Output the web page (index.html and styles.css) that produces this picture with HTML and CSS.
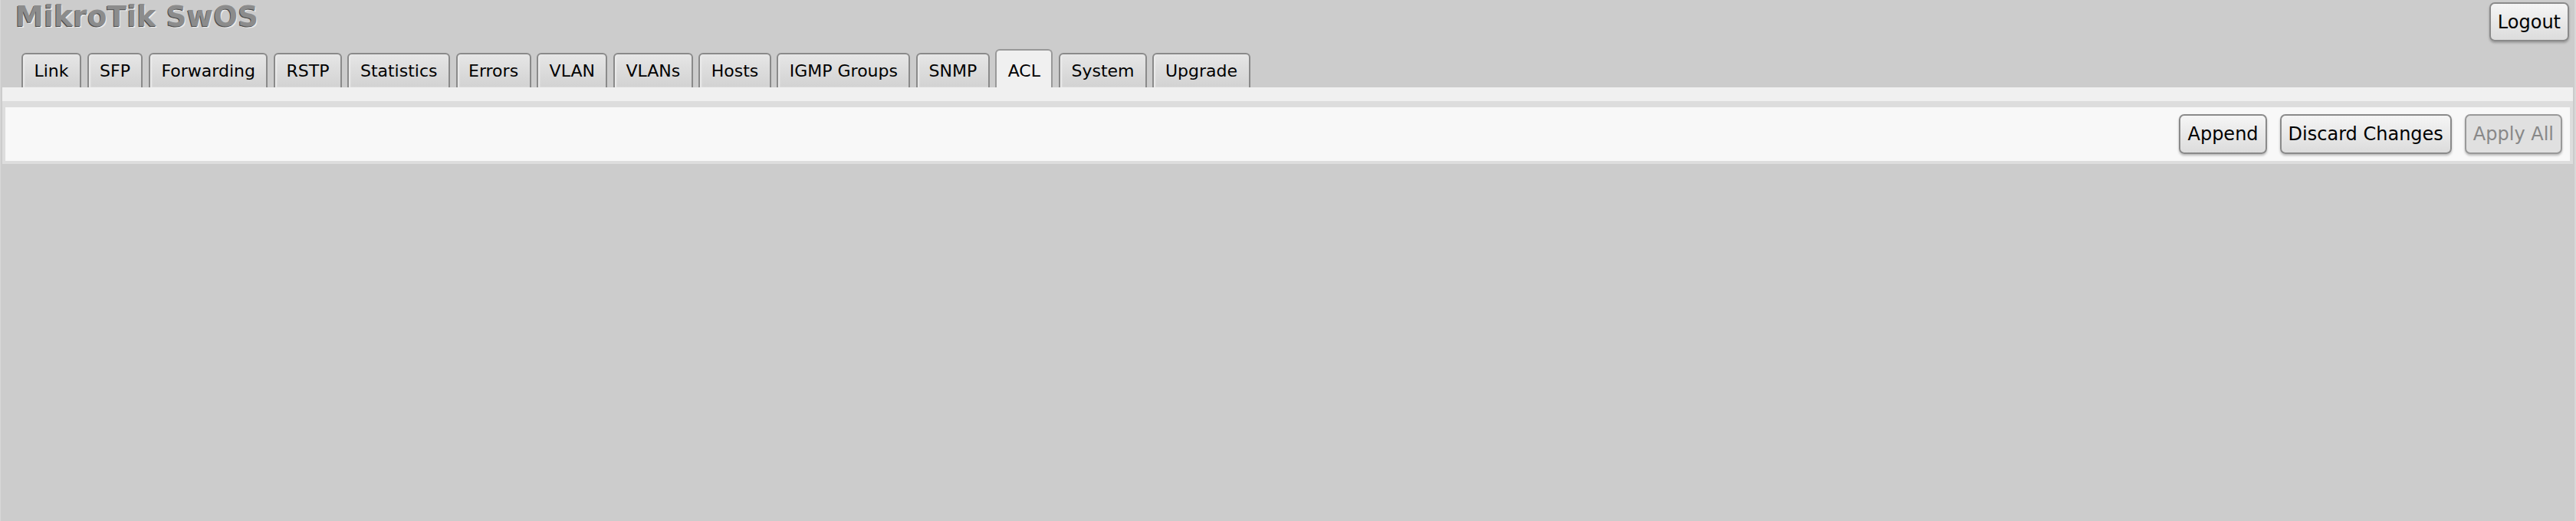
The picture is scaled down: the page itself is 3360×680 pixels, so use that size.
FILE: index.html
```html
<!DOCTYPE html>
<html lang="en">
<head>
<meta charset="utf-8">
<title>MikroTik SwOS</title>
<link rel="stylesheet" href="styles.css">
</head>
<body>
<div class="page">
  <header class="header">
    <h1 class="title">MikroTik SwOS</h1>
    <button class="btn logout">Logout</button>
  </header>
  <nav class="tabs">
    <div class="tab">Link</div>
    <div class="tab">SFP</div>
    <div class="tab">Forwarding</div>
    <div class="tab">RSTP</div>
    <div class="tab">Statistics</div>
    <div class="tab">Errors</div>
    <div class="tab">VLAN</div>
    <div class="tab">VLANs</div>
    <div class="tab">Hosts</div>
    <div class="tab">IGMP Groups</div>
    <div class="tab">SNMP</div>
    <div class="tab active">ACL</div>
    <div class="tab">System</div>
    <div class="tab">Upgrade</div>
  </nav>
  <section class="content">
    <div class="strip"></div>
    <div class="content-body">
      <div class="toolbar">
        <button class="btn">Append</button>
        <button class="btn">Discard Changes</button>
        <button class="btn disabled">Apply All</button>
      </div>
    </div>
  </section>
</div>
</body>
</html>
```

FILE: styles.css
```css
html {
  background: #cccccc;
}
body {
  margin: 0;
  min-height: 680px;
  border-left: 1px solid #d8d8d8;
  border-right: 2px solid #d8d8d8;
  padding: 0 2px;
  box-sizing: border-box;
  font-family: "DejaVu Sans", Verdana, sans-serif;
  color: #000;
}
.header {
  display: flex;
  justify-content: space-between;
  align-items: flex-start;
  height: 64px;
}
.title {
  margin: 2px 0 0 17px;
  font-size: 37px;
  line-height: 40px;
  letter-spacing: 0.4px;
  font-weight: bold;
  color: #8c8c8c;
  text-shadow: -1px 1px 0 #4a4a4a, 1px 2px 0 #ececec;
}
.btn {
  font-family: "DejaVu Sans", Verdana, sans-serif;
  font-size: 24px;
  color: #000;
  height: 52px;
  padding: 0 9px;
  border: 2px solid #8a8a8a;
  border-radius: 7px;
  background: linear-gradient(#f5f5f5, #dcdcdc);
  box-shadow: 0 2px 3px rgba(0, 0, 0, 0.25);
}
.logout {
  margin: 3px 5px 0 0;
  height: 51px;
}
.btn.disabled {
  color: #888;
  border-color: #999;
  background: #e0e0e0;
}
.tabs {
  display: flex;
  align-items: flex-end;
  gap: 7.5px;
  padding-left: 25px;
  height: 50px;
}
.tab {
  height: 45px;
  box-sizing: border-box;
  display: flex;
  align-items: center;
  padding: 0 14.5px;
  border: 2px solid #8a8a8a;
  border-bottom: none;
  border-radius: 6px 6px 0 0;
  background: linear-gradient(#e6e6e6, #d2d2d2);
  box-shadow: inset 2px 0 2px #ececec;
  font-size: 22px;
  color: #000;
}
.tab.active {
  height: 50px;
  padding-top: 5px;
  background: #f0f0f0;
  border-color: #999;
  box-shadow: none;
}
.content {
  background: #dddddd;
}
.strip {
  height: 18px;
  background: #f0f0f0;
}
.content-body {
  padding: 8px 4px 4px 4px;
}
.toolbar {
  height: 70px;
  background: #f8f8f8;
  display: flex;
  justify-content: flex-end;
  align-items: center;
  gap: 17px;
  padding-right: 10px;
}
```
